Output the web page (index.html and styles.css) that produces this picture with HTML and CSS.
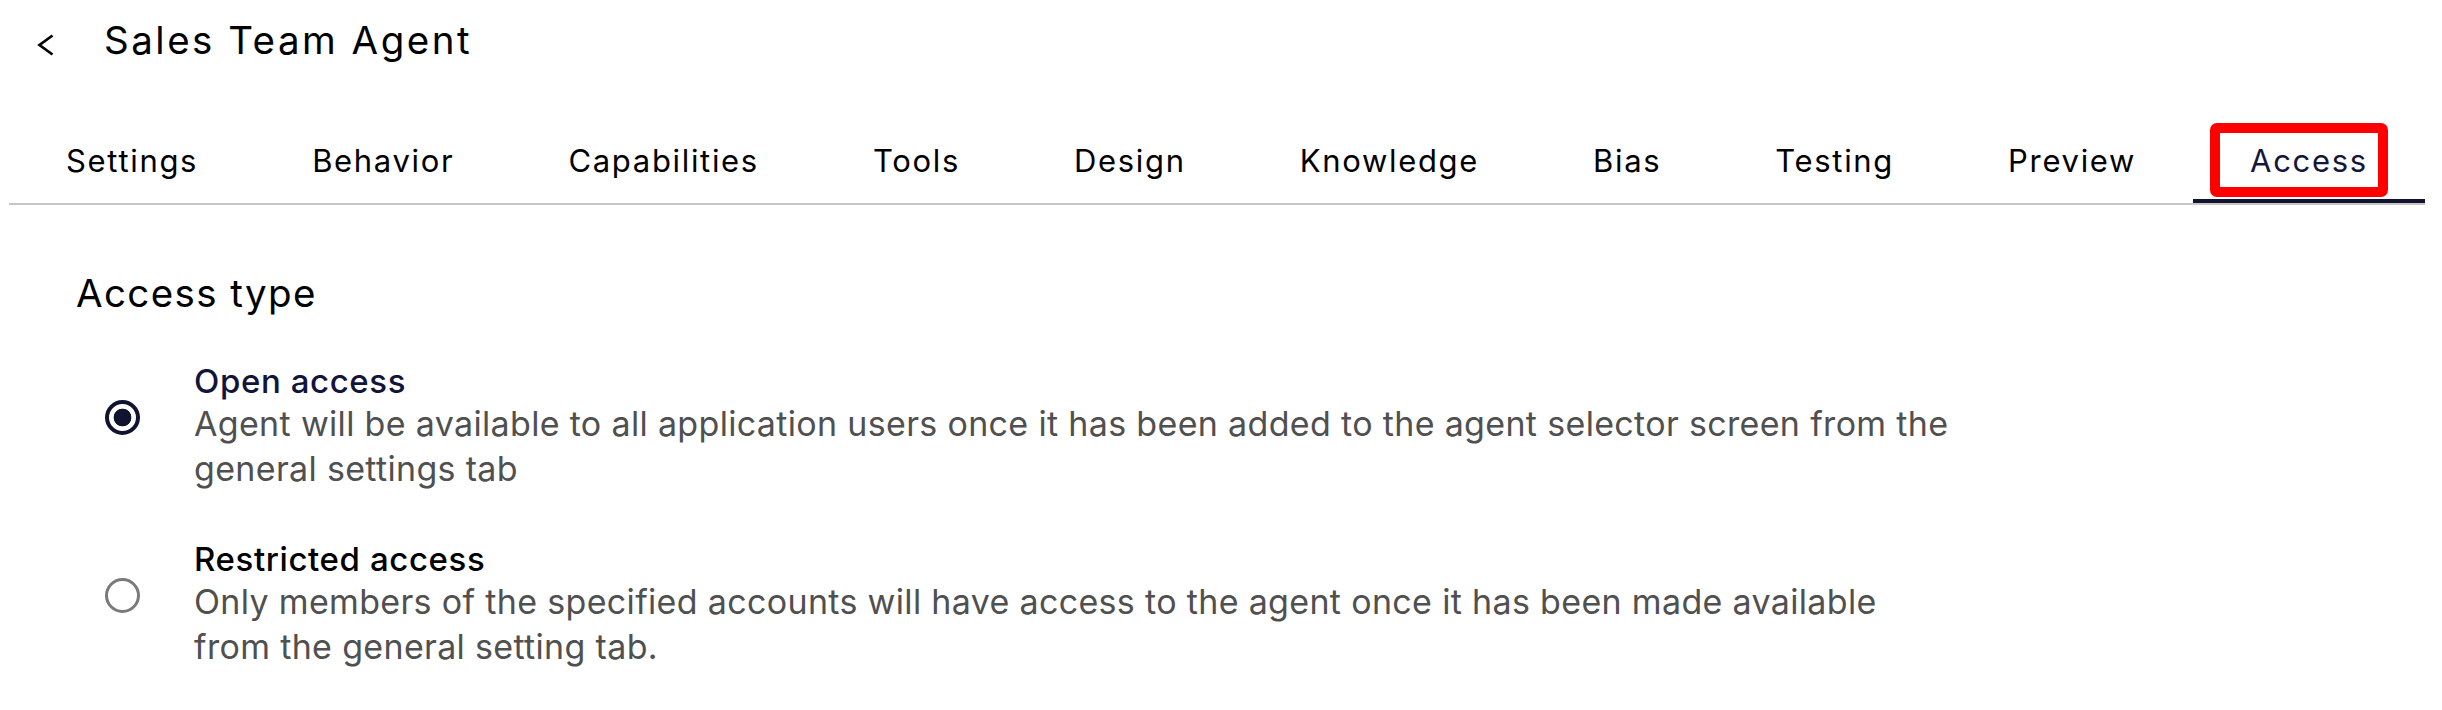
FILE: index.html
```html
<!DOCTYPE html>
<html>
<head>
<meta charset="utf-8">
<link rel="stylesheet" href="styles.css">
</head>
<body>
<div class="page">
  <header class="header">
    <button class="back" aria-label="Back">
      <svg width="17" height="22" viewBox="0 0 17 22"><polyline points="15.5,1.5 2.5,11 15.5,20.5" fill="none" stroke="#000" stroke-width="2.7"/></svg>
    </button>
    <h1 class="title">Sales Team Agent</h1>
  </header>
  <nav class="tabs">
    <div class="tab">Settings</div>
    <div class="tab">Behavior</div>
    <div class="tab">Capabilities</div>
    <div class="tab">Tools</div>
    <div class="tab">Design</div>
    <div class="tab">Knowledge</div>
    <div class="tab">Bias</div>
    <div class="tab">Testing</div>
    <div class="tab">Preview</div>
    <div class="tab active">Access<span class="highlight"></span></div>
  </nav>
  <section class="content">
    <h2 class="section-title">Access type</h2>
    <div class="option">
      <span class="radio checked"></span>
      <div class="option-text">
        <div class="option-title selected">Open access</div>
        <div class="option-desc">Agent will be available to all application users once it has been added to the agent selector screen from the general settings tab</div>
      </div>
    </div>
    <div class="option second">
      <span class="radio"></span>
      <div class="option-text">
        <div class="option-title">Restricted access</div>
        <div class="option-desc">Only members of the specified accounts will have access to the agent once it has been made available from the general setting tab.</div>
      </div>
    </div>
  </section>
</div>
</body>
</html>
```
FILE: styles.css
```css
* { box-sizing: border-box; }
body { margin: 0; background: #fff; font-family: Inter, "DejaVu Sans", sans-serif; color: #000; }
.header { display: flex; align-items: flex-start; padding: 15px 0 0 37px; }
.back { border: 0; background: none; padding: 0; margin-top: 19px; width: 67px; height: 22px; display: flex; }
.title { margin: 0; font-size: 38.5px; line-height: 50px; font-weight: 400; letter-spacing: 2.5px; }
.tabs { display: inline-flex; margin: 58px 0 0 9px; border-bottom: 2px solid #c6c6c6; vertical-align: top; }
.tab { position: relative; height: 80px; padding: 19px 57px 0; font-size: 31px; line-height: 38px; letter-spacing: 1.68px; white-space: nowrap; }
.tab.active { color: #14163a; box-shadow: inset 0 -4px 0 #11132f; }
.highlight { position: absolute; left: 17px; right: 37px; top: 0; bottom: 6px; border: 10px solid #f00; border-radius: 7px; }
.content { padding-left: 76px; }
.section-title { margin: 63px 0 0; font-size: 38.5px; line-height: 50px; font-weight: 400; letter-spacing: 1.4px; }
.option { display: flex; align-items: flex-start; margin-top: 43px; }
.option.second { margin-top: 48px; }
.radio { flex: none; width: 35px; height: 35px; border-radius: 50%; border: 3px solid #7a7a7a; margin: 39px 54px 0 29px; }
.radio.checked { border: 4px solid #11142f; background: radial-gradient(circle, #11142f 0 8.5px, transparent 9.2px); }
.option-title { font-size: 33px; line-height: 40px; font-weight: 500; letter-spacing: 0.6px; }
.option-title.selected { color: #12153a; }
.option-desc { font-size: 34px; line-height: 45px; letter-spacing: 0.33px; color: #505050; max-width: 1762px; }
```
